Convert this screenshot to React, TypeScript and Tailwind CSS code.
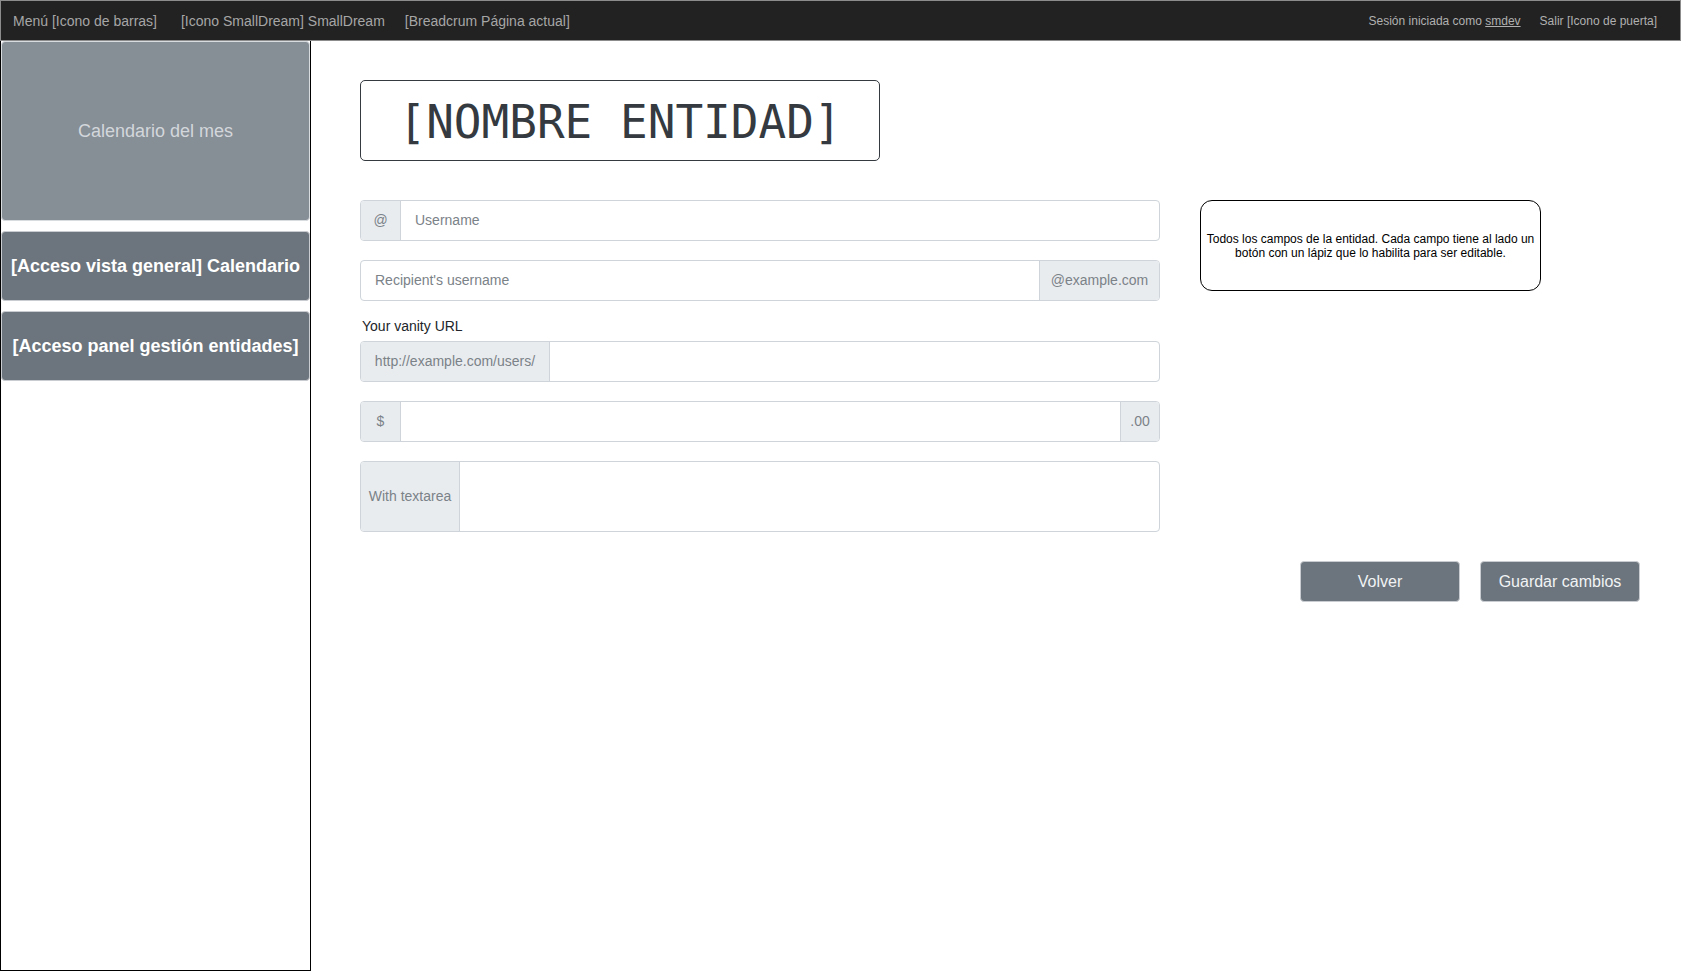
import React from "react";

export default function App() {
  return (
    <div className="h-[971px] w-[1681px] flex flex-col bg-white font-['Liberation_Sans',Arial,sans-serif] overflow-hidden">
      {/* Top bar */}
      <header className="h-[41px] shrink-0 border border-[#8c8c8c] bg-[#222222] flex items-center justify-between pl-[12px] pr-[23px]">
        <div className="flex items-center text-[14px] text-[#a6a6a6] pt-[1px]">
          <span>Menú [Icono de barras]</span>
          <span className="ml-6">[Icono SmallDream] SmallDream</span>
          <span className="ml-5">[Breadcrum Página actual]</span>
        </div>
        <div className="flex items-center text-[12px] text-[#b0b0b0] pt-[1px]">
          <span>
            Sesión iniciada como <span className="underline">smdev</span>
          </span>
          <span className="ml-[19px]">Salir [Icono de puerta]</span>
        </div>
      </header>

      <div className="flex flex-1 min-h-0">
        {/* Sidebar */}
        <aside className="w-[311px] shrink-0 border border-t-0 border-black flex flex-col">
          <div className="h-[180px] bg-[#868e96] rounded-[4px] border border-[#d9dcdf] flex items-center justify-center text-[18px] text-[#d3d7db]">
            Calendario del mes
          </div>
          <div className="mt-[10px] h-[70px] bg-[#6c757d] rounded-[4px] border border-[#c9ccd0] flex items-center justify-center text-[18px] font-bold text-white">
            [Acceso vista general] Calendario
          </div>
          <div className="mt-[10px] h-[70px] bg-[#6c757d] rounded-[4px] border border-[#c9ccd0] flex items-center justify-center text-[18px] font-bold text-white">
            [Acceso panel gestión entidades]
          </div>
        </aside>

        {/* Main */}
        <main className="flex-1 pl-[49px] pt-[39px] pr-[41px]">
          <div className="w-[520px] h-[81px] border border-[#343a40] rounded-[5px] flex items-center justify-center pt-[3px]">
            <span className="font-['DejaVu_Sans_Mono',monospace] text-[46px] leading-none text-[#343a40]">
              [NOMBRE ENTIDAD]
            </span>
          </div>

          <div className="mt-[39px] flex items-start gap-[40px]">
            <div className="w-[800px] flex flex-col text-[14px]">
              {/* Username */}
              <div className="h-[41px] flex border border-[#ced4da] rounded-[4px] overflow-hidden">
                <div className="w-[40px] bg-[#e9ecef] border-r border-[#ced4da] flex items-center justify-center text-[#7b8288]">
                  @
                </div>
                <input
                  className="flex-1 px-[14px] outline-none placeholder:text-[#7b8288] text-[#495057]"
                  placeholder="Username"
                />
              </div>

              {/* Recipient */}
              <div className="mt-[19px] h-[41px] flex border border-[#ced4da] rounded-[4px] overflow-hidden">
                <input
                  className="flex-1 px-[14px] outline-none placeholder:text-[#7b8288] text-[#495057]"
                  placeholder="Recipient's username"
                />
                <div className="w-[120px] bg-[#e9ecef] border-l border-[#ced4da] flex items-center justify-center text-[#7b8288]">
                  @example.com
                </div>
              </div>

              {/* Vanity */}
              <label className="mt-[15px] h-[21px] leading-[21px] pl-[2px] text-[#212529]">
                Your vanity URL
              </label>
              <div className="mt-[4px] h-[41px] flex border border-[#ced4da] rounded-[4px] overflow-hidden">
                <div className="w-[189px] bg-[#e9ecef] border-r border-[#ced4da] flex items-center justify-center text-[#7b8288]">
                  http://example.com/users/
                </div>
                <input className="flex-1 px-[14px] outline-none" />
              </div>

              {/* Amount */}
              <div className="mt-[19px] h-[41px] flex border border-[#ced4da] rounded-[4px] overflow-hidden">
                <div className="w-[40px] bg-[#e9ecef] border-r border-[#ced4da] flex items-center justify-center text-[#7b8288]">
                  $
                </div>
                <input className="flex-1 px-[14px] outline-none" />
                <div className="w-[39px] bg-[#e9ecef] border-l border-[#ced4da] flex items-center justify-center text-[#7b8288]">
                  .00
                </div>
              </div>

              {/* Textarea */}
              <div className="mt-[19px] h-[71px] flex border border-[#ced4da] rounded-[4px] overflow-hidden">
                <div className="w-[99px] bg-[#e9ecef] border-r border-[#ced4da] flex items-center justify-center text-[#7b8288]">
                  With textarea
                </div>
                <textarea className="flex-1 px-[14px] py-2 outline-none resize-none" />
              </div>
            </div>

            <div className="w-[341px] h-[91px] border border-black rounded-[12px] flex items-center justify-center px-[5px] text-center text-[12px] leading-[14px] text-black">
              Todos los campos de la entidad. Cada campo tiene al lado un botón con un lápiz que lo habilita para ser editable.
            </div>
          </div>

          <div className="mt-[29px] flex justify-end gap-5">
            <button className="w-[160px] h-[41px] bg-[#6c757d] rounded-[4px] border border-[#c9ccd0] text-[16px] text-[#f1f3f5]">
              Volver
            </button>
            <button className="w-[160px] h-[41px] bg-[#6c757d] rounded-[4px] border border-[#c9ccd0] text-[16px] text-[#f1f3f5]">
              Guardar cambios
            </button>
          </div>
        </main>
      </div>
    </div>
  );
}
